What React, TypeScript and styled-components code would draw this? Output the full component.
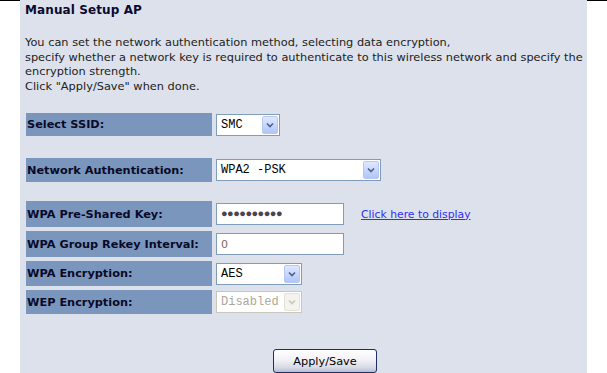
import React from "react";
import styled, { createGlobalStyle } from "styled-components";

const Global = createGlobalStyle`
  html, body { margin: 0; padding: 0; background: #ffffff; }
  body { font-family: "DejaVu Sans", Verdana, sans-serif; }
`;

const Page = styled.div`
  display: flex;
  width: 607px;
  height: 373px;
  overflow: hidden;
`;

const Edge = styled.div<{ $w: number }>`
  width: ${(p) => p.$w}px;
  flex: none;
  border-top: 1px solid #000;
  box-sizing: border-box;
`;

const Panel = styled.div`
  width: 567px;
  flex: none;
  background: #dce1eb;
  padding: 2px 0 0 5px;
  box-sizing: border-box;
  color: #000;
  white-space: nowrap;
`;

const Title = styled.div`
  font-weight: bold;
  font-size: 12px;
  letter-spacing: 0.1px;
  line-height: 14px;
  margin-top: 1px;
  color: #0a0a30;
`;

const Intro = styled.div`
  margin-top: 18px;
  font-size: 11.35px;
  line-height: 14.5px;
  color: #222;
`;

const Row = styled.div<{ $h: number; $mt: number }>`
  display: flex;
  align-items: center;
  gap: 4px;
  height: ${(p) => p.$h}px;
  margin-top: ${(p) => p.$mt}px;
  margin-left: 1px;
`;

const Label = styled.div`
  width: 186px;
  height: 100%;
  background: #7b96bd;
  display: flex;
  align-items: center;
  padding-left: 1px;
  box-sizing: border-box;
  font-weight: bold;
  font-size: 11.3px;
  color: #0a0a28;
`;

const Field = styled.div<{ $w: number; $disabled?: boolean }>`
  width: ${(p) => p.$w}px;
  height: 22px;
  box-sizing: border-box;
  border: 1px solid ${(p) => (p.$disabled ? "#c9c7ba" : "#7f9db9")};
  background: #fff;
  display: flex;
  align-items: center;
  padding: 1px 1px 1px 4px;
  font-family: "Liberation Mono", monospace;
  font-size: 12px;
  color: ${(p) => (p.$disabled ? "#aca899" : "#000")};
`;

const FieldText = styled.span`
  flex: 1;
`;

const TextValue = styled.span`
  font-family: "DejaVu Sans", Verdana, sans-serif;
  font-size: 11px;
  color: #7a6a60;
`;

const Dots = styled.span`
  font-size: 11px;
  letter-spacing: -0.5px;
  color: #4a4450;
`;

const Arrow = styled.span<{ $disabled?: boolean }>`
  width: 16px;
  height: 18px;
  box-sizing: border-box;
  border: 1px solid ${(p) => (p.$disabled ? "#e4e2d8" : "#b7c8f0")};
  border-radius: 2px;
  background: ${(p) =>
    p.$disabled
      ? "#f4f3ee"
      : "linear-gradient(180deg, #dfe8ff 0%, #c3d3fd 60%, #b1c5f7 100%)"};
  display: flex;
  align-items: center;
  justify-content: center;
`;

const Link = styled.a`
  margin-left: 13px;
  color: #3030f0;
  text-decoration: underline;
  font-size: 10.8px;
  cursor: pointer;
`;

const ButtonRow = styled.div`
  display: flex;
  justify-content: center;
  margin-top: 35px;
  padding-left: 38px;
`;

const Button = styled.button`
  width: 104px;
  height: 24px;
  border: 1px solid #1f2f63;
  border-radius: 3px;
  background: linear-gradient(180deg, #ffffff 0%, #f2f2f6 45%, #d6d9e6 80%, #b9bdd2 100%);
  font-family: "DejaVu Sans", Verdana, sans-serif;
  font-size: 11.3px;
  color: #000;
  padding: 0;
`;

const Chevron = ({ disabled }: { disabled?: boolean }) => (
  <svg width="8" height="6" viewBox="0 0 8 6">
    <path
      d="M1 1.5 L4 4.5 L7 1.5"
      fill="none"
      stroke={disabled ? "#c9c7ba" : "#4d6185"}
      strokeWidth="1.6"
    />
  </svg>
);

const Select = ({ w, value, disabled }: { w: number; value: string; disabled?: boolean }) => (
  <Field $w={w} $disabled={disabled}>
    <FieldText>{value}</FieldText>
    <Arrow $disabled={disabled}>
      <Chevron disabled={disabled} />
    </Arrow>
  </Field>
);

export default function App() {
  return (
    <>
      <Global />
      <Page>
        <Edge $w={20} />
        <Panel>
          <Title>Manual Setup AP</Title>
          <Intro>
            You can set the network authentication method, selecting data encryption,
            <br />
            specify whether a network key is required to authenticate to this wireless network and specify the
            <br />
            encryption strength.
            <br />
            Click "Apply/Save" when done.
          </Intro>
          <Row $h={23} $mt={20}>
            <Label>Select SSID:</Label>
            <Select w={64} value="SMC" />
          </Row>
          <Row $h={24} $mt={22}>
            <Label>Network Authentication:</Label>
            <Select w={165} value="WPA2 -PSK" />
          </Row>
          <Row $h={26} $mt={19}>
            <Label>WPA Pre-Shared Key:</Label>
            <Field $w={128}>
              <Dots>●●●●●●●●●●</Dots>
            </Field>
            <Link>Click here to display</Link>
          </Row>
          <Row $h={26} $mt={4}>
            <Label>WPA Group Rekey Interval:</Label>
            <Field $w={128}>
              <TextValue>0</TextValue>
            </Field>
          </Row>
          <Row $h={25} $mt={4}>
            <Label>WPA Encryption:</Label>
            <Select w={86} value="AES" />
          </Row>
          <Row $h={24} $mt={4}>
            <Label>WEP Encryption:</Label>
            <Select w={86} value="Disabled" disabled />
          </Row>
          <ButtonRow>
            <Button>Apply/Save</Button>
          </ButtonRow>
        </Panel>
        <Edge $w={20} />
      </Page>
    </>
  );
}
